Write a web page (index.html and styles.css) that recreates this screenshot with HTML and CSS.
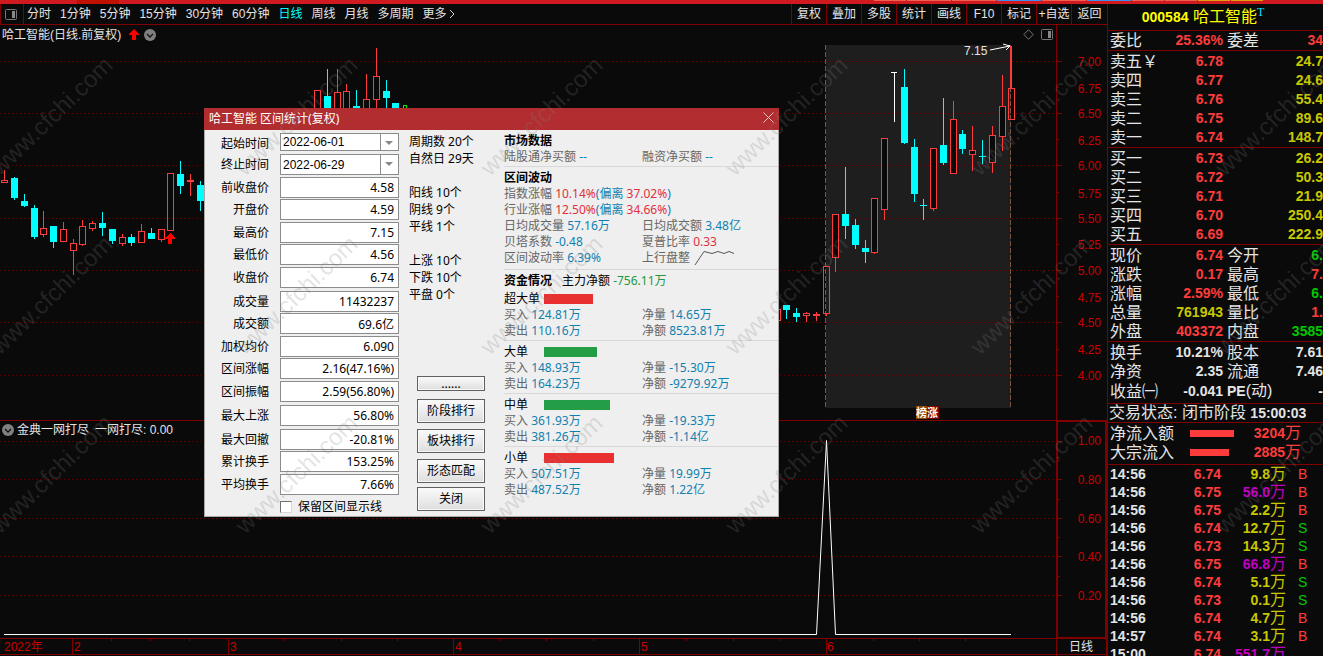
FILE: index.html
```html
<!DOCTYPE html>
<html lang="zh-CN">
<head>
<meta charset="utf-8">
<title>哈工智能 000584</title>
<link rel="stylesheet" href="styles.css">
</head>
<body>
<div class="app">
  <div class="strip">
    <span class="strip-active"></span>
    <span class="seg seg-m"></span><span class="seg seg-l"></span><span class="seg seg-l"></span><span class="seg seg-l blue"></span><span class="seg seg-l"></span><span class="seg seg-l blue"></span><span class="seg seg-m"></span><span class="seg seg-m"></span><span class="seg seg-m gold"></span><span class="seg seg-m gold"></span>
  </div>

  <main class="left">
    <nav class="toolbar">
      <button class="layout-btn" aria-label="布局"><svg width="12" height="11" viewBox="0 0 12 11"><rect x=".5" y=".5" width="11" height="10" rx="1" fill="none" stroke="#777"/><path d="M7 2h3v7H7z" fill="#888"/></svg></button>
      <div class="periods">
        <button>分时</button><button>1分钟</button><button>5分钟</button><button>15分钟</button><button>30分钟</button><button>60分钟</button><button class="on">日线</button><button>周线</button><button>月线</button><button>多周期</button><button>更多<svg width="8" height="10" viewBox="0 0 8 10"><path d="M3 1l4 4-4 4" fill="none" stroke="#d0d0d0"/></svg></button>
      </div>
      <div class="tools">
        <button>复权</button><button>叠加</button><button>多股</button><button>统计</button><button>画线</button><button>F10</button><button>标记</button><button>+自选</button><button>返回</button>
      </div>
    </nav>

    <header class="chart-head">
      <span>哈工智能(日线.前复权)</span>
      <svg class="up" width="10" height="11" viewBox="0 0 10 11"><path d="M5 0l5 5v1H7v5H3V6H0V5z" fill="#f00"/></svg>
      <svg width="12" height="12" viewBox="0 0 12 12"><circle cx="6" cy="6" r="6" fill="#808080"/><path d="M3 5l3 3 3-3" fill="none" stroke="#111" stroke-width="1.3"/></svg>
      <span class="head-icons">
        <svg width="11" height="11" viewBox="0 0 11 11"><path d="M5.500.8l4.700 4.700-4.700 4.700L.8 5.500z" fill="none" stroke="#777"/></svg>
        <svg width="12" height="11" viewBox="0 0 12 11"><rect x=".5" y=".5" width="11" height="10" rx="1" fill="none" stroke="#777"/><path d="M7 2h3v7H7z" fill="#888"/></svg>
      </span>
      <span class="axis-gap"></span>
    </header>

    <svg class="plot" viewBox="0 44 1107 376" role="img" aria-label="日线K线图">
      <path class="range" d="M826 45h185v363H826z"/>
      <path class="dots" d="M0 61.500h1056M0 113.500h1056M0 165.500h1056M0 218.500h1056M0 270.500h1056M0 322.500h1056M0 375.500h1056"/>
      <path class="frame" d="M1056.500 44v376M1057 61.500h5M1057 113.500h5M1057 165.500h5M1057 218.500h5M1057 270.500h5M1057 322.500h5M1057 375.500h5M1057 87.500h2M1057 139.500h2M1057 192.500h2M1057 244.500h2M1057 296.500h2M1057 349.500h2"/>
      <g class="scale">
        <text x="1101" y="66">7.00</text><text x="1101" y="93">6.75</text><text x="1101" y="118">6.50</text><text x="1101" y="145">6.25</text><text x="1101" y="170">6.00</text><text x="1101" y="198">5.75</text><text x="1101" y="223">5.50</text><text x="1101" y="249">5.25</text><text x="1101" y="275">5.00</text><text x="1101" y="302">4.75</text><text x="1101" y="327">4.50</text><text x="1101" y="354">4.25</text><text x="1101" y="380">4.00</text>
      </g>
      <path class="edge" d="M825.500 45v363M1010.500 45v363"/>
      <path class="rise" d="M4.500 170v10M1.500 180.500h6v2h-6zM43.500 211v17M43.500 235v2M40.500 228.500h6v6h-6zM63.500 222v7M60.500 229.500h6v12h-6zM73.500 239v4M73.500 251v24M70.500 243.500h6v7h-6zM82.500 220v6M82.500 245v1M79.500 226.500h6v18h-6zM92.500 221v2M92.500 229v2M89.500 223.500h6v5h-6zM122.500 234v3M122.500 244v2M119.500 237.500h6v6h-6zM141.500 224v7M138.500 231.500h6v11h-6zM161.500 240v2M158.500 229.500h6v10h-6zM167.500 173.500h6v57h-6zM190.500 174v22M187 180.500h7M187 181.500h7"/>
      <path class="rise" d="M314.500 120v-29.500h6V120M337.500 69v23M334.500 120V92.500h6V120M346.500 84v7M343.500 120V91.500h6V120M366.500 74v25M363.500 120V99.500h6V120M376.500 48v28M376.500 100v20M373.500 76.500h6v23h-6z"/>
      <path class="rise" d="M774.500 309.500h6v11h-6zM806.500 312v1M806.500 316v6M803.500 313.500h6v2h-6zM816.500 312v9M813 314.500h7M813 315.500h7M826.500 314v2M823.500 266.500h6v47h-6zM1011.500 46v42M1010.500 46v42M1008.500 88.500h6v31h-6z"/>
      <path class="rise solid" d="M835.500 258v14M832.500 214.500h6v43h-6zM874.500 253v1M871.500 198.500h6v54h-6zM884.500 210v10M881.500 138.500h6v71h-6zM933.500 209v2M930.500 148.500h6v60h-6zM953.500 101v18M950.500 119.500h6v54h-6zM972.500 126v24M972.500 155v16M969.500 150.500h6v4h-6zM992.500 126v9M992.500 163v10M989.500 135.500h6v27h-6zM1002.500 75v31M1002.500 137v14M999.500 106.500h6v30h-6z"/>
      <path class="fall" d="M14 177h1v1h3v20h-3v2h-1v-2h-3v-20h3zM24 194h1v7h3v5h-3v1h-1v-1h-3v-5h3zM34 205h1v3h3v29h-3v2h-1v-2h-3v-29h3zM50 226h7v16h-3v6h-1v-6h-3zM102 212h1v11h3v5h-3v8h-1v-8h-3v-5h3zM109 229h7v12h-3v3h-1v-3h-3zM131 234h1v3h3v6h-3v3h-1v-3h-3v-6h3zM151 228h1v5h3v6h-7v-6h3zM180 161h1v13h3v12h-3v8h-1v-8h-3v-12h3zM200 181h1v4h3v16h-3v10h-1v-10h-3v-16h3z"/>
      <path class="fall" d="M327 69h1v27h3v24h-7V96h3zM356 90h1v16h3v14h-7v-14h3zM386 80h1v11h3v7h-3v12h-1V98h-3v-7h3zM392 103h7v17h-7z"/>
      <path class="fall" d="M783 305h7v5h-3v9h-1v-9h-3zM796 308h1v5h3v4h-3v5h-1v-5h-3v-4h3zM845 167h1v47h3v12h-3v13h-1v-13h-3v-12h3zM855 219h1v6h3v20h-3v4h-1v-4h-3v-20h3zM865 240h1v8h3v4h-3v11h-1v-11h-3v-4h3zM904 69h1v18h3v56h-3v1h-1v-1h-3V87h3zM914 139h1v8h3v47h-3v8h-1v-8h-3v-47h3zM923 199h1v6h3v1h-3v14h-1v-14h-3v-1h3zM943 98h1v47h3v18h-3v2h-1v-2h-3v-18h3zM962 130h1v4h3v15h-3v5h-1v-5h-3v-15h3zM982 140h1v16h3v1h-3v7h-1v-7h-3v-1h3z"/>
      <path class="now" d="M403.500 110v-4.500h3v4.500"/>
      <path class="white" d="M891 72.500h6M894.500 72v50"/>
      <path class="signal" d="M170 233l5 5v1h-3v5h-4v-5h-3v-1z"/>
      <text class="peak" x="964" y="55">7.15</text>
      <path class="pointer" d="M990 50l20-4M1003 44l7 2-4 4"/>
      <path fill="#964b00" d="M916 406h11v13h-11z"/><path fill="#800000" d="M927 406h12v13h-12z"/>
      <text class="tag" x="916" y="417">榜</text><text class="tag" x="927" y="417">涨</text>
    </svg>

    <header class="indicator-head">
      <svg width="12" height="12" viewBox="0 0 12 12"><circle cx="6" cy="6" r="6" fill="#808080"/><path d="M3 5l3 3 3-3" fill="none" stroke="#111" stroke-width="1.300"/></svg>
      <span>金典一网打尽</span><span class="reading">一网打尽: 0.00</span>
      <span class="axis-gap framed"></span>
    </header>

    <svg class="plot" viewBox="0 438 1107 218" role="img" aria-label="一网打尽指标图">
      <path class="dots" d="M0 441.500h1056M0 479.500h1056M0 518.500h1056M0 556.500h1056M0 595.500h1056"/>
      <path class="frame" d="M1056.500 438v218M1057.500 438v200M1106.500 438v218M1105.500 438v200M0 638.500h1107M1057 637.500h50M0 654.500h1107M1058 441.500h4M1058 479.500h4M1058 518.500h4M1058 556.500h4M1058 595.500h4M1058 460.500h2M1058 499.500h2M1058 537.500h2M1058 576.500h2"/>
      <path class="frame" d="M72.500 639v15M228.500 639v15M453.500 639v15M639.500 639v15M826.500 639v15M111.500 639v2M150.500 639v2M189.500 639v2M284.500 639v2M341.500 639v2M397.500 639v2M500.500 639v2M546.500 639v2M593.500 639v2M686.500 639v2M733.500 639v2M779.500 639v2M873.500 639v2M919.500 639v2M965.500 639v2"/>
      <path class="curve" d="M4 634.500h812.500l10-194 9 194H1011"/>
      <g class="scale">
        <text x="1101" y="445">1.00</text><text x="1101" y="484">0.80</text><text x="1101" y="523">0.60</text><text x="1101" y="561">0.40</text><text x="1101" y="600">0.20</text>
      </g>
      <g class="months">
        <text x="4" y="651">2022年</text><text x="74" y="651">2</text><text x="230" y="651">3</text><text x="455" y="651">4</text><text x="641" y="651">5</text><text x="827" y="651">6</text>
      </g>
      <text class="period" x="1069" y="651">日线</text>
    </svg>
  </main>

  <aside class="quote">
    <h1><b>000584</b> 哈工智能<sup>T</sup></h1>
    <table class="grid4 single"><tbody>
      <tr><th>委比</th><td class="r">25.36%</td><th>委差</th><td class="r">34</td></tr>
    </tbody></table>
    <table class="book"><tbody>
      <tr><th>卖五￥</th><td class="r">6.78</td><td class="y">24.7</td></tr>
      <tr><th>卖四</th><td class="r">6.77</td><td class="y">24.6</td></tr>
      <tr><th>卖三</th><td class="r">6.76</td><td class="y">55.4</td></tr>
      <tr><th>卖二</th><td class="r">6.75</td><td class="y">89.6</td></tr>
      <tr><th>卖一</th><td class="r">6.74</td><td class="y">148.7</td></tr>
    </tbody></table>
    <table class="book"><tbody>
      <tr><th>买一</th><td class="r">6.73</td><td class="y">26.2</td></tr>
      <tr><th>买二</th><td class="r">6.72</td><td class="y">50.3</td></tr>
      <tr><th>买三</th><td class="r">6.71</td><td class="y">21.9</td></tr>
      <tr><th>买四</th><td class="r">6.70</td><td class="y">250.4</td></tr>
      <tr><th>买五</th><td class="r">6.69</td><td class="y">222.9</td></tr>
    </tbody></table>
    <table class="grid4"><tbody>
      <tr><th>现价</th><td class="r">6.74</td><th>今开</th><td class="g">6.</td></tr>
      <tr><th>涨跌</th><td class="r">0.17</td><th>最高</th><td class="r">7.</td></tr>
      <tr><th>涨幅</th><td class="r">2.59%</td><th>最低</th><td class="g">6.</td></tr>
      <tr><th>总量</th><td class="y">761943</td><th>量比</th><td class="r">1.</td></tr>
      <tr><th>外盘</th><td class="r">403372</td><th>内盘</th><td class="g">3585</td></tr>
    </tbody></table>
    <table class="grid4 roomy"><tbody>
      <tr><th>换手</th><td>10.21%</td><th>股本</th><td>7.61</td></tr>
      <tr><th>净资</th><td>2.35</td><th>流通</th><td>7.46</td></tr>
      <tr><th>收益㈠</th><td>-0.041</td><th><b>PE</b>(动)</th><td>-</td></tr>
    </tbody></table>
    <p class="status">交易状态: 闭市阶段 <b>15:00:03</b></p>
    <table class="flow roomy"><tbody>
      <tr><th>净流入额</th><td><span class="bar" style="width:44px"></span></td><td class="r">3204<i>万</i></td></tr>
      <tr><th>大宗流入</th><td><span class="bar" style="width:39px"></span></td><td class="r">2885<i>万</i></td></tr>
    </tbody></table>
    <table class="ticks"><tbody>
      <tr><td>14:56</td><td>6.74</td><td class="y">9.8<i>万</i></td><td class="r">B</td></tr>
      <tr><td>14:56</td><td>6.75</td><td class="p">56.0<i>万</i></td><td class="r">B</td></tr>
      <tr><td>14:56</td><td>6.75</td><td class="y">2.2<i>万</i></td><td class="r">B</td></tr>
      <tr><td>14:56</td><td>6.74</td><td class="y">12.7<i>万</i></td><td class="g">S</td></tr>
      <tr><td>14:56</td><td>6.73</td><td class="y">14.3<i>万</i></td><td class="g">S</td></tr>
      <tr><td>14:56</td><td>6.75</td><td class="p">66.8<i>万</i></td><td class="r">B</td></tr>
      <tr><td>14:56</td><td>6.74</td><td class="y">5.1<i>万</i></td><td class="g">S</td></tr>
      <tr><td>14:56</td><td>6.73</td><td class="y">0.1<i>万</i></td><td class="g">S</td></tr>
      <tr><td>14:56</td><td>6.74</td><td class="y">4.7<i>万</i></td><td class="r">B</td></tr>
      <tr><td>14:57</td><td>6.74</td><td class="y">3.1<i>万</i></td><td class="r">B</td></tr>
      <tr><td>15:00</td><td>6.74</td><td class="p">551.7<i>万</i></td><td></td></tr>
    </tbody></table>
  </aside>

  <section class="dialog" role="dialog" aria-labelledby="dlg-title">
    <header class="dlg-bar">
      <h2 id="dlg-title">哈工智能 区间统计(复权)</h2>
      <button aria-label="关闭窗口"><svg width="11" height="11" viewBox="0 0 11 11"><path d="M.5.5l10 10M10.500.5l-10 10" stroke="#e8c4c4" fill="none"/></svg></button>
    </header>
    <div class="dlg-body">
      <form class="fields">
        <label for="f1">起始时间</label><span class="combo short"><select id="f1"><option>2022-06-01</option></select></span>
        <label for="f2">终止时间</label><span class="combo"><select id="f2"><option>2022-06-29</option></select></span>
        <label for="f3">前收盘价</label><input id="f3" readonly value="4.58">
        <label for="f4">开盘价</label><input id="f4" readonly value="4.59">
        <label for="f5">最高价</label><input id="f5" readonly value="7.15">
        <label for="f6">最低价</label><input id="f6" readonly value="4.56">
        <label for="f7">收盘价</label><input id="f7" readonly value="6.74">
        <label for="f8">成交量</label><input id="f8" readonly value="11432237">
        <label for="f9">成交额</label><input id="f9" readonly value="69.6亿">
        <label for="f10">加权均价</label><input id="f10" readonly value="6.090">
        <label for="f11">区间涨幅</label><input id="f11" readonly value="2.16(47.16%)">
        <label for="f12">区间振幅</label><input id="f12" readonly value="2.59(56.80%)">
        <label for="f13">最大上涨</label><input id="f13" readonly value="56.80%">
        <label for="f14">最大回撤</label><input id="f14" readonly value="-20.81%">
        <label for="f15">累计换手</label><input id="f15" readonly value="153.25%">
        <label for="f16">平均换手</label><input id="f16" readonly value="7.66%">
        <label class="keep"><input type="checkbox">保留区间显示线</label>
      </form>

      <div class="middle">
        <p>周期数 20个</p><p>自然日 29天</p>
        <p class="apart">阳线 10个</p><p>阴线 9个</p><p>平线 1个</p>
        <p class="apart">上涨 10个</p><p>下跌 10个</p><p>平盘 0个</p>
        <div class="actions">
          <button class="slim">......</button><button>阶段排行</button><button>板块排行</button><button>形态匹配</button><button class="last">关闭</button>
        </div>
      </div>

      <div class="stats">
        <section class="tight">
          <h3>市场数据</h3>
          <div class="pair"><p>陆股通净买额 <b>--</b></p><p>融资净买额 <b>--</b></p></div>
        </section>
        <section class="loose">
          <h3>区间波动</h3>
          <p>指数涨幅 <b class="up-c">10.14%</b><b>(偏离 </b><b class="up-c">37.02%</b><b>)</b></p>
          <p>行业涨幅 <b class="up-c">12.50%</b><b>(偏离 </b><b class="up-c">34.66%</b><b>)</b></p>
          <div class="pair"><p>日均成交量 <b>57.16万</b></p><p>日均成交额 <b>3.48亿</b></p></div>
          <div class="pair"><p>贝塔系数 <b>-0.48</b></p><p>夏普比率 <b class="up-c">0.33</b></p></div>
          <div class="pair"><p>区间波动率 <b>6.39%</b></p><p class="trend">上行盘整 <svg width="40" height="16" viewBox="0 0 40 16"><path d="M1 15l9-13.500 8 2 6-2 6 2 5-2 5 2" fill="none" stroke="#555"/></svg></p></div>
        </section>
        <section>
          <div class="fund"><h3>资金情况</h3><span>主力净额 <b class="down-c">-756.11万</b></span></div>
          <div class="order"><span>超大单</span><span class="meter red" style="width:49px"></span></div>
          <div class="pair"><p>买入 <b>124.81万</b></p><p>净量 <b>14.65万</b></p></div>
          <div class="pair"><p>卖出 <b>110.16万</b></p><p>净额 <b>8523.81万</b></p></div>
        </section>
        <section>
          <div class="order"><span>大单</span><span class="meter" style="width:53px"></span></div>
          <div class="pair"><p>买入 <b>148.93万</b></p><p>净量 <b>-15.30万</b></p></div>
          <div class="pair"><p>卖出 <b>164.23万</b></p><p>净额 <b>-9279.92万</b></p></div>
        </section>
        <section>
          <div class="order"><span>中单</span><span class="meter" style="width:66px"></span></div>
          <div class="pair"><p>买入 <b>361.93万</b></p><p>净量 <b>-19.33万</b></p></div>
          <div class="pair"><p>卖出 <b>381.26万</b></p><p>净额 <b>-1.14亿</b></p></div>
        </section>
        <section>
          <div class="order"><span>小单</span><span class="meter red" style="width:70px"></span></div>
          <div class="pair"><p>买入 <b>507.51万</b></p><p>净量 <b>19.99万</b></p></div>
          <div class="pair"><p>卖出 <b>487.52万</b></p><p>净额 <b>1.22亿</b></p></div>
        </section>
      </div>
    </div>
  </section>

  <svg class="watermark" aria-hidden="true">
    <defs>
      <g id="wm-row">
        <text transform="translate(0 177) rotate(-44)">www.cfchi.com</text>
        <text transform="translate(245 177) rotate(-44)">www.cfchi.com</text>
        <text transform="translate(490 177) rotate(-44)">www.cfchi.com</text>
        <text transform="translate(735 177) rotate(-44)">www.cfchi.com</text>
        <text transform="translate(980 177) rotate(-44)">www.cfchi.com</text>
        <text transform="translate(1225 177) rotate(-44)">www.cfchi.com</text>
      </g>
    </defs>
    <use href="#wm-row"/><use href="#wm-row" y="179"/><use href="#wm-row" y="358"/>
  </svg>
</div>
</body>
</html>
```
FILE: styles.css
```css
* { box-sizing: border-box; }
body { margin: 0; background: #0a0a0a; }
h1, h2, h3, p { margin: 0; font-weight: normal; }
button { margin: 0; padding: 0; border: 0; background: none; color: inherit; font: inherit; }
svg { display: block; flex: none; }

.app {
  position: relative;
  display: grid;
  grid-template-columns: minmax(0, 1fr) 216px;
  grid-template-rows: 4px minmax(0, 1fr);
  height: 100vh;
  overflow: hidden;
  background: #0a0a0a;
  color: #e4e4e4;
  font: 12px/16px "Liberation Sans", "Noto Sans CJK SC", sans-serif;
}

/* top strip */
.strip { grid-column: 1 / -1; display: flex; gap: 1px; padding: 0 60px 0 77px; background: #d11a1f; }
.strip-active { width: 42px; margin-right: auto; background: #c01000; }
.seg { height: 1px; background: #f06050; }
.seg-m { width: 32px; }
.seg-l { width: 44px; }
.seg.blue { background: #4090f0; }
.seg.gold { background: #e0a010; }

/* toolbar */
.left { min-width: 0; }
.toolbar { display: flex; height: 21px; border-bottom: 1px solid #800000; line-height: 20px; white-space: nowrap; }
.layout-btn { width: 24px; padding-left: 4px; border: solid #800000; border-width: 0 1px; }
.periods { display: flex; gap: 9px; padding-left: 3px; }
.periods button { display: flex; align-items: center; }
.periods .on { color: #00ffff; }
.tools { display: flex; margin-left: auto; }
.tools button { width: 35px; border-left: 1px solid #800000; }
.tools button:last-child { width: 36px; }

/* charts */
.chart-head, .indicator-head { display: flex; align-items: center; white-space: nowrap; }
.chart-head { height: 19px; padding-left: 2px; }
.chart-head .up { margin: 0 5px 0 8px; }
.head-icons { display: flex; gap: 7px; margin-left: auto; padding-right: 3px; }
.axis-gap { width: 51px; align-self: stretch; border-left: 1px solid #800000; }
.axis-gap.framed { margin-left: auto; border: solid #800000; border-width: 1px 2px 0; }
.indicator-head { height: 18px; border-top: 1px solid #800000; padding-left: 2px; gap: 3px; }
.reading { padding-left: 3px; }
.plot { width: 100%; height: auto; overflow: visible; font-size: 12px; }
.plot path { shape-rendering: crispEdges; }
.range { fill: #1e1e1e; }
.dots { fill: none; stroke: #600000; stroke-dasharray: 1 3; }
.frame { fill: none; stroke: #800000; }
.edge { fill: none; stroke: #7a5540; stroke-dasharray: 5 2; }
.rise { fill: none; stroke: #ff3c3c; }
.rise.solid { fill: #0a0a0a; }
.fall { fill: #00ffff; }
.now { fill: none; stroke: #00f000; }
.white { fill: none; stroke: #fff; }
.signal { fill: #f00; }
.plot .pointer, .plot .curve { fill: none; stroke: #fff; shape-rendering: auto; }
.scale { fill: #cc0000; text-anchor: end; }
.months { fill: #cc0000; }
.peak, .period { fill: #e4e4e4; }
.tag { fill: #fff; font-size: 11px; font-weight: bold; }

/* quote panel */
.quote { min-width: 0; border-left: 1px solid #800000; overflow: hidden; white-space: nowrap; }
.quote h1 { height: 27px; border-bottom: 1px solid #800000; color: #ffff00; font-size: 16px; line-height: 26px; text-align: center; padding-right: 25px; }
.quote h1 b, .status b { font-size: 14px; }
.quote h1 sup { color: #00e0ff; font: 12px/12px "Liberation Serif", serif; vertical-align: 6px; }
.quote table { width: 100%; table-layout: fixed; border-collapse: separate; border-spacing: 0; border-bottom: 1px solid #800000; padding: 1px 0 0 2px; }
.quote table.single { padding: 0 0 0 2px; }
.quote table.roomy { padding-bottom: 2px; }
.quote th, .quote td { height: 19px; padding: 0; font-size: 14px; line-height: 19px; }
.quote th { font-size: 16px; font-weight: normal; text-align: left; }
.quote td { font-weight: bold; text-align: right; }
.quote th b { font-size: 14px; }
.quote i { font-size: 16px; font-style: normal; font-weight: normal; line-height: 16px; }
.grid4 th:nth-child(1), .book th { width: 50px; }
.grid4 td:nth-child(2), .book td:nth-child(2) { width: 63px; }
.grid4 th:nth-child(3) { width: 54px; padding-left: 4px; }
.grid4 td:last-child, .book td:last-child { width: auto; }
.status { height: 19px; padding-left: 1px; border-bottom: 1px solid #800000; font-size: 16px; line-height: 18px; }
.flow th { width: 80px; }
.flow td:last-child { width: 88px; padding-right: 22px; }
.bar { display: block; height: 7px; background: #ff3c3c; }
.quote .ticks { border: 0; padding-top: 0; }
.quote .ticks td { height: 18px; line-height: 18px; }
.ticks td:nth-child(1) { width: 50px; text-align: left; }
.ticks td:nth-child(2) { width: 61px; color: #ff3c3c; }
.ticks td:nth-child(3) { width: 65px; }
.quote .ticks td:nth-child(4) { padding-left: 12px; text-align: left; font-size: 14px; font-weight: normal; }
.quote .r { color: #ff3c3c; }
.quote .y { color: #c8c800; }
.quote .g { color: #00c800; }
.quote .p { color: #c000c0; }

/* floating statistics window */
.dialog {
  position: absolute;
  left: 204px;
  top: 108px;
  width: 575px;
  border: 1px solid #a8a8a8;
  border-top: 0;
  background: #efefef;
  color: #000;
  font: 12px/16px "Noto Sans", "Noto Sans CJK SC", sans-serif;
  white-space: nowrap;
}
.dlg-bar { display: flex; justify-content: space-between; align-items: center; height: 22px; margin: 0 -1px; padding: 0 5px; background: #b22d30; color: #fff; }
.dlg-bar h2 { font-size: 12px; }
.dlg-bar button { align-self: flex-start; padding-top: 4px; }
.dlg-body { display: grid; grid-template-columns: 194px 76px minmax(0, 1fr); padding-top: 3px; }
.fields {
  display: grid;
  grid-template-columns: 64px 119px;
  column-gap: 11px;
  grid-template-rows: 21px 23px 22px 23px 22px 23px 24px 22px 23px 22px 23px 24px 24px 22px 23px 22px 20px;
  align-items: start;
}
.fields > label { text-align: right; line-height: 21px; }
.fields input, .combo select {
  width: 100%; height: 21px; margin: 0; padding: 0 4px;
  border: 1px solid #8c8c8c; border-radius: 0; background: #fff; color: #000;
  font: inherit; text-align: right; appearance: none;
}
.combo { position: relative; display: block; height: 21px; }
.combo select { height: 100%; padding: 0 20px 0 2px; font-family: "Liberation Sans", sans-serif; text-align: left; }
.combo.short { height: 18px; }
.combo::before { content: ""; position: absolute; right: 18px; top: 0; bottom: 0; width: 1px; background: #8c8c8c; }
.combo::after { content: ""; position: absolute; right: 6px; top: 8px; border: solid transparent; border-width: 4px 4px 0; border-top-color: #888; }
.fields .keep { grid-column: 1 / -1; display: flex; align-items: center; gap: 6px; padding-left: 75px; }
.fields .keep input { width: 12px; height: 12px; padding: 0; border-color: #707070 #d8d8d8 #d8d8d8 #707070; }
.fields .keep input:checked { background: #707070; }

.middle { display: flex; flex-direction: column; padding-left: 10px; line-height: 17px; }
.middle .apart { margin-top: 17px; }
.actions { display: grid; gap: 6px; width: 68px; margin: auto 0 5px 8px; }
.actions button { height: 24px; border: 1px solid #606060; background: linear-gradient(#fafafa, #dedede); box-shadow: inset 0 0 0 1px #f8f8f8; line-height: 20px; }
.actions .slim { height: 15px; margin-bottom: 2px; line-height: 10px; }
.actions .last { margin-top: -2px; }

.stats { padding-left: 29px; color: #666; }
.stats section { padding: 3px 0 1px; border-bottom: 1px solid #d8d8d8; }
.stats section:last-child { border-bottom: 0; }
.stats .tight { padding: 0 0 1px; }
.stats .loose { padding: 3px 0; }
.stats h3 { color: #000; font-size: 12px; font-weight: bold; }
.stats b { color: #1080b0; font-weight: normal; }
.stats .up-c { color: #e03040; }
.stats .down-c { color: #209840; }
.pair { display: grid; grid-template-columns: 138px 1fr; }
.trend { display: flex; gap: 4px; }
.fund { display: flex; gap: 10px; margin-bottom: 2px; color: #000; }
.order { display: grid; grid-template-columns: 40px 1fr; align-items: center; color: #000; }
.meter { height: 10px; background: #249e46; }
.meter.red { background: #e83030; }

.watermark { position: absolute; left: 0; top: 0; width: 100%; height: 100%; pointer-events: none; fill: #808080; fill-opacity: .22; font: 24px "Liberation Sans", sans-serif; }
```
